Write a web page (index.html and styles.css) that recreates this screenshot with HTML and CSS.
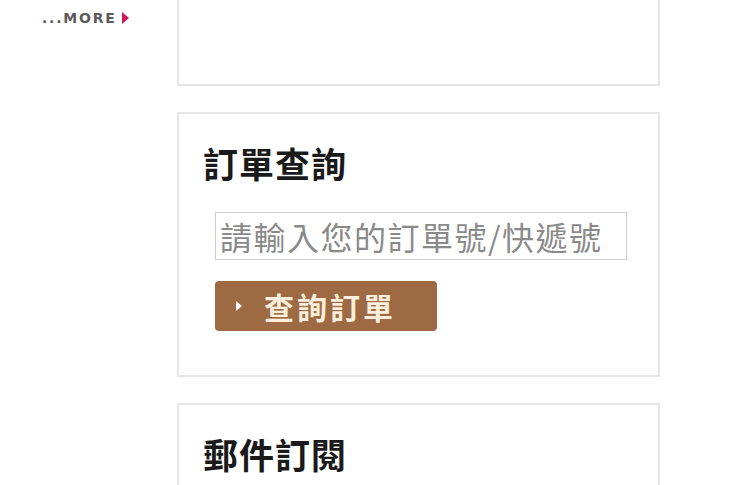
FILE: index.html
```html
<!DOCTYPE html>
<html lang="zh-Hant">
<head>
<meta charset="UTF-8">
<title>訂單查詢</title>
<link rel="stylesheet" href="styles.css">
</head>
<body>

<div class="pagina">
  <div class="lateral">
    <a class="mas" href="#">...MORE <span class="flecha"></span></a>
  </div>

  <div class="principal">
    <div class="caja caja-cortada"></div>

    <div class="caja">
      <h2>訂單查詢</h2>
      <input class="pedido" type="text" placeholder="請輸入您的訂單號/快遞號">
      <button class="boton"><span class="tri"></span>查詢訂單</button>
    </div>

    <div class="caja">
      <h2>郵件訂閱</h2>
    </div>
  </div>
</div>

</body>
</html>
```

FILE: styles.css
```css
body, html {
  margin: 0;
  padding: 0;
  overflow: hidden;
  background: #fff;
  font-family: "Noto Sans CJK TC", "Noto Sans", sans-serif;
  height: 100%;
}
.pagina {
  display: flex;
}
.lateral {
  width: 177px;
  padding-top: 10px;
}
.mas {
  display: flex;
  align-items: center;
  margin-left: 42px;
  color: #5a5a5a;
  font-family: "DejaVu Sans", sans-serif;
  font-weight: bold;
  font-size: 14px;
  letter-spacing: 1.8px;
  text-decoration: none;
  height: 16px;
}
.flecha {
  display: inline-block;
  margin-left: 5px;
  border-left: 7px solid #d4145a;
  border-top: 6px solid transparent;
  border-bottom: 6px solid transparent;
}
.principal {
  width: 483px;
}
.caja {
  border: 2px solid #e6e6e6;
  padding: 29px 0 44px 24px;
  margin-bottom: 26px;
}
.caja-cortada {
  border-top: none;
  height: 84px;
  padding: 0;
}
h2 {
  margin: 0;
  font-size: 35px;
  line-height: 40px;
  font-weight: bold;
  color: #1a1a1a;
  letter-spacing: 1px;
}
.pedido {
  display: block;
  box-sizing: border-box;
  margin: 29px 0 0 12px;
  width: 412px;
  height: 48px;
  border: 1px solid #c9cdd2;
  padding: 0 4px;
  font-family: inherit;
  font-size: 32px;
  letter-spacing: 1.5px;
  color: #555;
  outline: none;
}
.pedido::placeholder {
  color: #8a8a8a;
}
.boton {
  display: flex;
  align-items: center;
  margin: 21px 0 0 12px;
  width: 222px;
  height: 50px;
  padding: 0 0 0 21px;
  border: none;
  border-radius: 4px;
  background: #9d6a43;
  color: #fbeedd;
  font-family: inherit;
  font-size: 30px;
  font-weight: bold;
  letter-spacing: 3px;
  cursor: pointer;
}
.tri {
  display: inline-block;
  margin-right: 22px;
  border-left: 6px solid #fff;
  border-top: 5px solid transparent;
  border-bottom: 5px solid transparent;
}
```
